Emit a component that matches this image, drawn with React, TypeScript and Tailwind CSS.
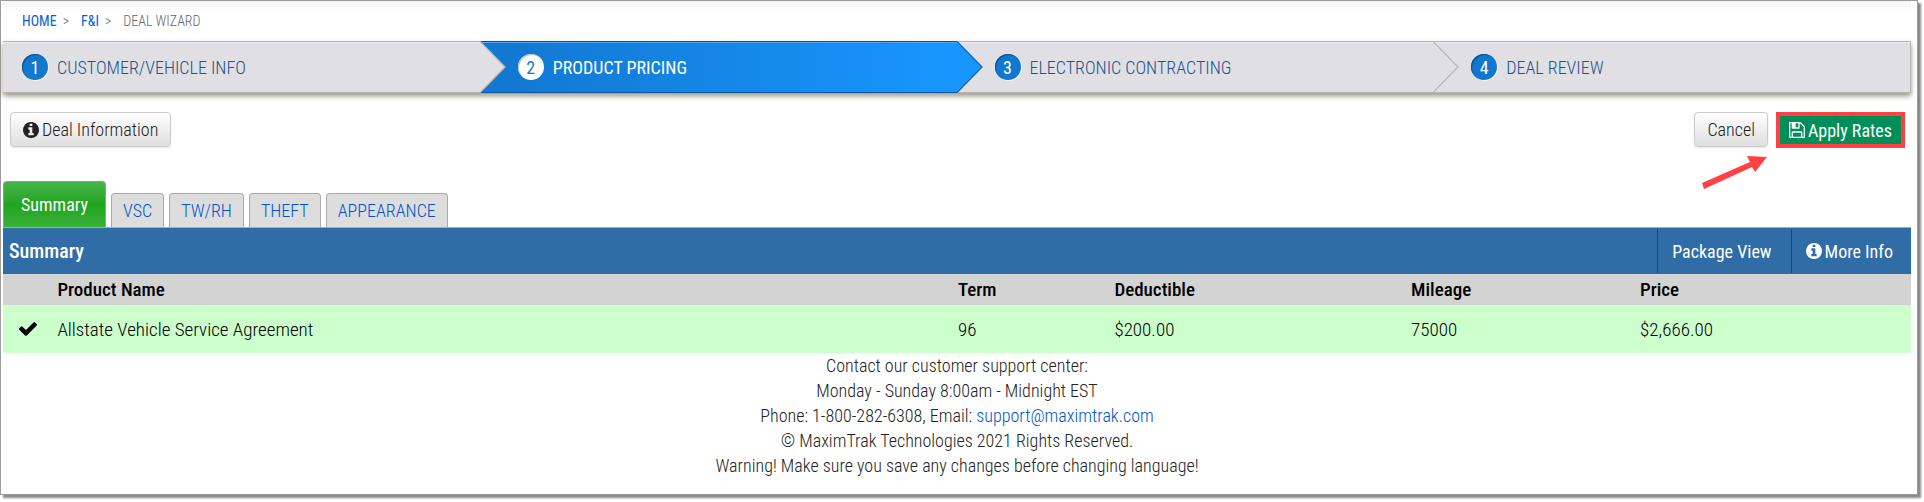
import React from 'react';
import clsx from 'clsx';

const steps = ['Customer/Vehicle Info', 'Product Pricing', 'Electronic Contracting', 'Deal Review'];
const activeStep = 1;

const tabs = ['VSC', 'TW/RH', 'THEFT', 'APPEARANCE'];

interface Product {
    name: string;
    term: string;
    deductible: string;
    mileage: string;
    price: string;
}

const products: Product[] = [
    {
        name: 'Allstate Vehicle Service Agreement',
        term: '96',
        deductible: '$200.00',
        mileage: '75000',
        price: '$2,666.00',
    },
];

const InfoIcon = () => (
    <svg viewBox="128 128 1536 1536" className="size-4 shrink-0" fill="currentColor" aria-hidden="true">
        <path d="M1152 1376v-160q0-14-9-23t-23-9h-96v-512q0-14-9-23t-23-9h-320q-14 0-23 9t-9 23v160q0 14 9 23t23 9h96v320h-96q-14 0-23 9t-9 23v160q0 14 9 23t23 9h448q14 0 23-9t9-23zm-128-896v-160q0-14-9-23t-23-9h-192q-14 0-23 9t-9 23v160q0 14 9 23t23 9h192q14 0 23-9t9-23zm640 416q0 209-103 385.5t-279.5 279.5-385.5 103-385.5-103-279.5-279.5-103-385.5 103-385.5 279.5-279.5 385.5-103 385.5 103 279.5 279.5 103 385.5z" />
    </svg>
);

const SaveIcon = () => (
    <svg viewBox="0 128 1536 1536" className="size-4 shrink-0" fill="currentColor" aria-hidden="true">
        <path d="M384 1536h768v-384h-768v384zM1280 1536h128v-896q0-14-10-38.5t-20-34.5l-281-281q-10-10-34-20t-39-10v416q0 40-28 68t-68 28h-576q-40 0-68-28t-28-68v-416h-128v1280h128v-416q0-40 28-68t68-28h832q40 0 68 28t28 68v416zM896 608v-320q0-13-9.5-22.5t-22.5-9.5h-192q-13 0-22.5 9.5t-9.5 22.5v320q0 13 9.5 22.5t22.5 9.5h192q13 0 22.5-9.5t9.5-22.5zM1536 640v928q0 40-28 68t-68 28h-1344q-40 0-68-28t-28-68v-1344q0-40 28-68t68-28h928q40 0 88 20t76 48l280 280q28 28 48 76t20 88z" />
    </svg>
);

const CheckIcon = () => (
    <svg viewBox="121 334 1550 1188" className="ml-4 h-3.5 w-[18px]" fill="currentColor" role="img" aria-label="Selected">
        <path d="M1671 566q0 40-28 68l-724 724-136 136q-28 28-68 28t-68-28l-136-136-362-362q-28-28-28-68t28-68l136-136q28-28 68-28t68 28l294 295 656-657q28-28 68-28t68 28l136 136q28 28 28 68z" />
    </svg>
);

// Arrow head that closes the previous step and points into the next one
const Chevron: React.FC<{ fill: string; stroke: string }> = ({ fill, stroke }) => (
    <svg viewBox="0 0 26 52" className="-my-px h-[52px] w-[26px] shrink-0" aria-hidden="true">
        <path d="M0 0L25.5 26L0 52Z" fill={fill} />
        <path d="M0 0.5L25 26L0 51.5" fill="none" stroke={stroke} strokeWidth="1.2" />
    </svg>
);

const Steps = () => (
    <ol className="grid grid-cols-4 border-r border-[#b5b5b5] shadow-[0_3px_5px_rgba(90,80,60,0.6)]">
        {steps.map((step, i) => {
            const active = i === activeStep;
            return (
                <li
                    key={step}
                    className={clsx(
                        'flex h-[52px] items-center border-y',
                        active
                            ? 'border-[#0c55a0] bg-linear-to-r from-[#1277cf] to-[#1896ff] shadow-[inset_0_1px_0_#4fa6f0]'
                            : 'border-[#b5b5b5] bg-[#e0e0e4] shadow-[inset_0_1px_0_#ebebee]',
                    )}
                >
                    {i > 0 && (
                        <Chevron
                            fill={i - 1 === activeStep ? '#1896ff' : '#e0e0e4'}
                            stroke={i - 1 === activeStep ? '#1465b3' : '#b5b5b5'}
                        />
                    )}
                    <a
                        href="#"
                        className={clsx(
                            'flex items-center gap-[9px] uppercase',
                            i > 0 ? 'pl-3' : 'pl-[19px]',
                            active ? 'font-normal text-white' : 'text-[#1f5288]',
                        )}
                    >
                        <span
                            className={clsx(
                                'flex size-[26px] items-center justify-center rounded-full font-normal',
                                active
                                    ? 'bg-white text-[#1277cf] shadow-[inset_1px_1px_1px_#bbb]'
                                    : 'bg-[#1277cf] text-white shadow-[inset_1px_1px_1px_#0b4f8c,1px_1px_0_#f4f4f6]',
                            )}
                        >
                            {i + 1}
                        </span>
                        {step}
                    </a>
                </li>
            );
        })}
    </ol>
);

const greyButton =
    'flex h-[35px] items-center gap-[3px] rounded border border-[#ccc] bg-linear-to-b from-white to-[#dfdfdf] px-3 text-[#222] shadow-[0_1px_2px_rgba(0,0,0,0.1)]';

const Toolbar = () => (
    <div className="mt-[19px] flex h-9 items-start justify-between pr-1.5 pl-[7px]">
        <button type="button" className={greyButton}>
            <InfoIcon />
            Deal Information
        </button>
        <div className="relative flex gap-2">
            <button type="button" className={greyButton}>
                Cancel
            </button>
            <button
                type="button"
                className="flex h-9 items-center gap-[3px] border-4 border-[#ff4143] bg-[#008f58] px-[9px] font-normal text-white"
            >
                <SaveIcon />
                Apply Rates
            </button>
            {/* Callout arrow pointing at Apply Rates */}
            <svg viewBox="0 0 65 33" className="absolute top-full left-2 mt-2 h-[33px] w-[65px]" aria-hidden="true">
                <path d="M0 27L48 6L45 0L65 1L53 16L50 11L2 33Z" fill="#ff4143" />
            </svg>
        </div>
    </div>
);

const Tabs = () => (
    <div role="tablist" className="mt-[33px] flex items-end gap-[5px] border-b border-[#aaa]">
        <button
            type="button"
            role="tab"
            aria-selected="true"
            className="h-[46px] rounded-t border border-b-0 border-[#9a9a9a] bg-linear-to-b from-[#46b446] via-[#21a421] to-[#38b038] px-[17px] font-normal text-white"
        >
            Summary
        </button>
        {tabs.map((tab) => (
            <button
                key={tab}
                type="button"
                role="tab"
                aria-selected="false"
                className="h-[34px] rounded-t border border-b-0 border-[#aaa] bg-[#ddd] px-[11px] text-[#0055cc]"
            >
                {tab}
            </button>
        ))}
    </div>
);

export default function App() {
    return (
        <div className="pr-[6px] pb-[6px] font-['Roboto_Condensed','Liberation_Sans_Narrow',Roboto,sans-serif] text-lg leading-[25px] font-light">
            <div className="border border-[#9c9c9c] bg-white pr-1.5 pb-4 pl-0.5 shadow-[3px_3px_2px_#888]">
                <nav className="flex h-10 items-center bg-linear-to-b from-[#f5f5f5] to-white to-30% pl-[19px] text-sm text-[#666] uppercase">
                    <a href="#" className="font-normal text-[#0b61d0]">Home</a>
                    <span className="mr-3 ml-1.5">&gt;</span>
                    <a href="#" className="font-normal text-[#0b61d0]">F&amp;I</a>
                    <span className="mr-3 ml-1.5">&gt;</span>
                    <span>Deal Wizard</span>
                </nav>

                <Steps />
                <Toolbar />
                <Tabs />

                <div className="flex h-[46px] items-stretch bg-[#306ca5] font-normal text-white">
                    <h2 className="flex-1 self-center pl-1.5 text-xl font-medium">Summary</h2>
                    <button type="button" className="my-px border-l border-[#1d4872] pr-[19px] pl-3.5">
                        Package View
                    </button>
                    <button type="button" className="my-px flex items-center gap-[3px] border-l border-[#1d4872] pr-[18px] pl-3.5">
                        <InfoIcon />
                        More Info
                    </button>
                </div>

                <table className="w-full table-fixed text-left text-[19px] text-black">
                    <thead className="bg-[#d3d3d3]">
                        <tr className="h-[31px]">
                            <th className="w-[2.85%]" aria-label="Selected" />
                            <th className="w-[47.2%] font-medium">Product Name</th>
                            <th className="w-[8.2%] font-medium">Term</th>
                            <th className="w-[15.55%] font-medium">Deductible</th>
                            <th className="w-[12%] font-medium">Mileage</th>
                            <th className="font-medium">Price</th>
                        </tr>
                    </thead>
                    <tbody>
                        {products.map((p) => (
                            <tr key={p.name} className="h-12 bg-[#ccffcc]">
                                <td><CheckIcon /></td>
                                <td>{p.name}</td>
                                <td>{p.term}</td>
                                <td>{p.deductible}</td>
                                <td>{p.mileage}</td>
                                <td>{p.price}</td>
                            </tr>
                        ))}
                    </tbody>
                </table>

                <footer className="text-center text-[#222]">
                    <p>Contact our customer support center:</p>
                    <p>Monday - Sunday 8:00am - Midnight EST</p>
                    <p>
                        Phone: 1-800-282-6308, Email:{' '}
                        <a href="mailto:support@maximtrak.com" className="text-[#0055cc]">support@maximtrak.com</a>
                    </p>
                    <p>© MaximTrak Technologies 2021 Rights Reserved.</p>
                    <p>Warning! Make sure you save any changes before changing language!</p>
                </footer>
            </div>
        </div>
    );
}
